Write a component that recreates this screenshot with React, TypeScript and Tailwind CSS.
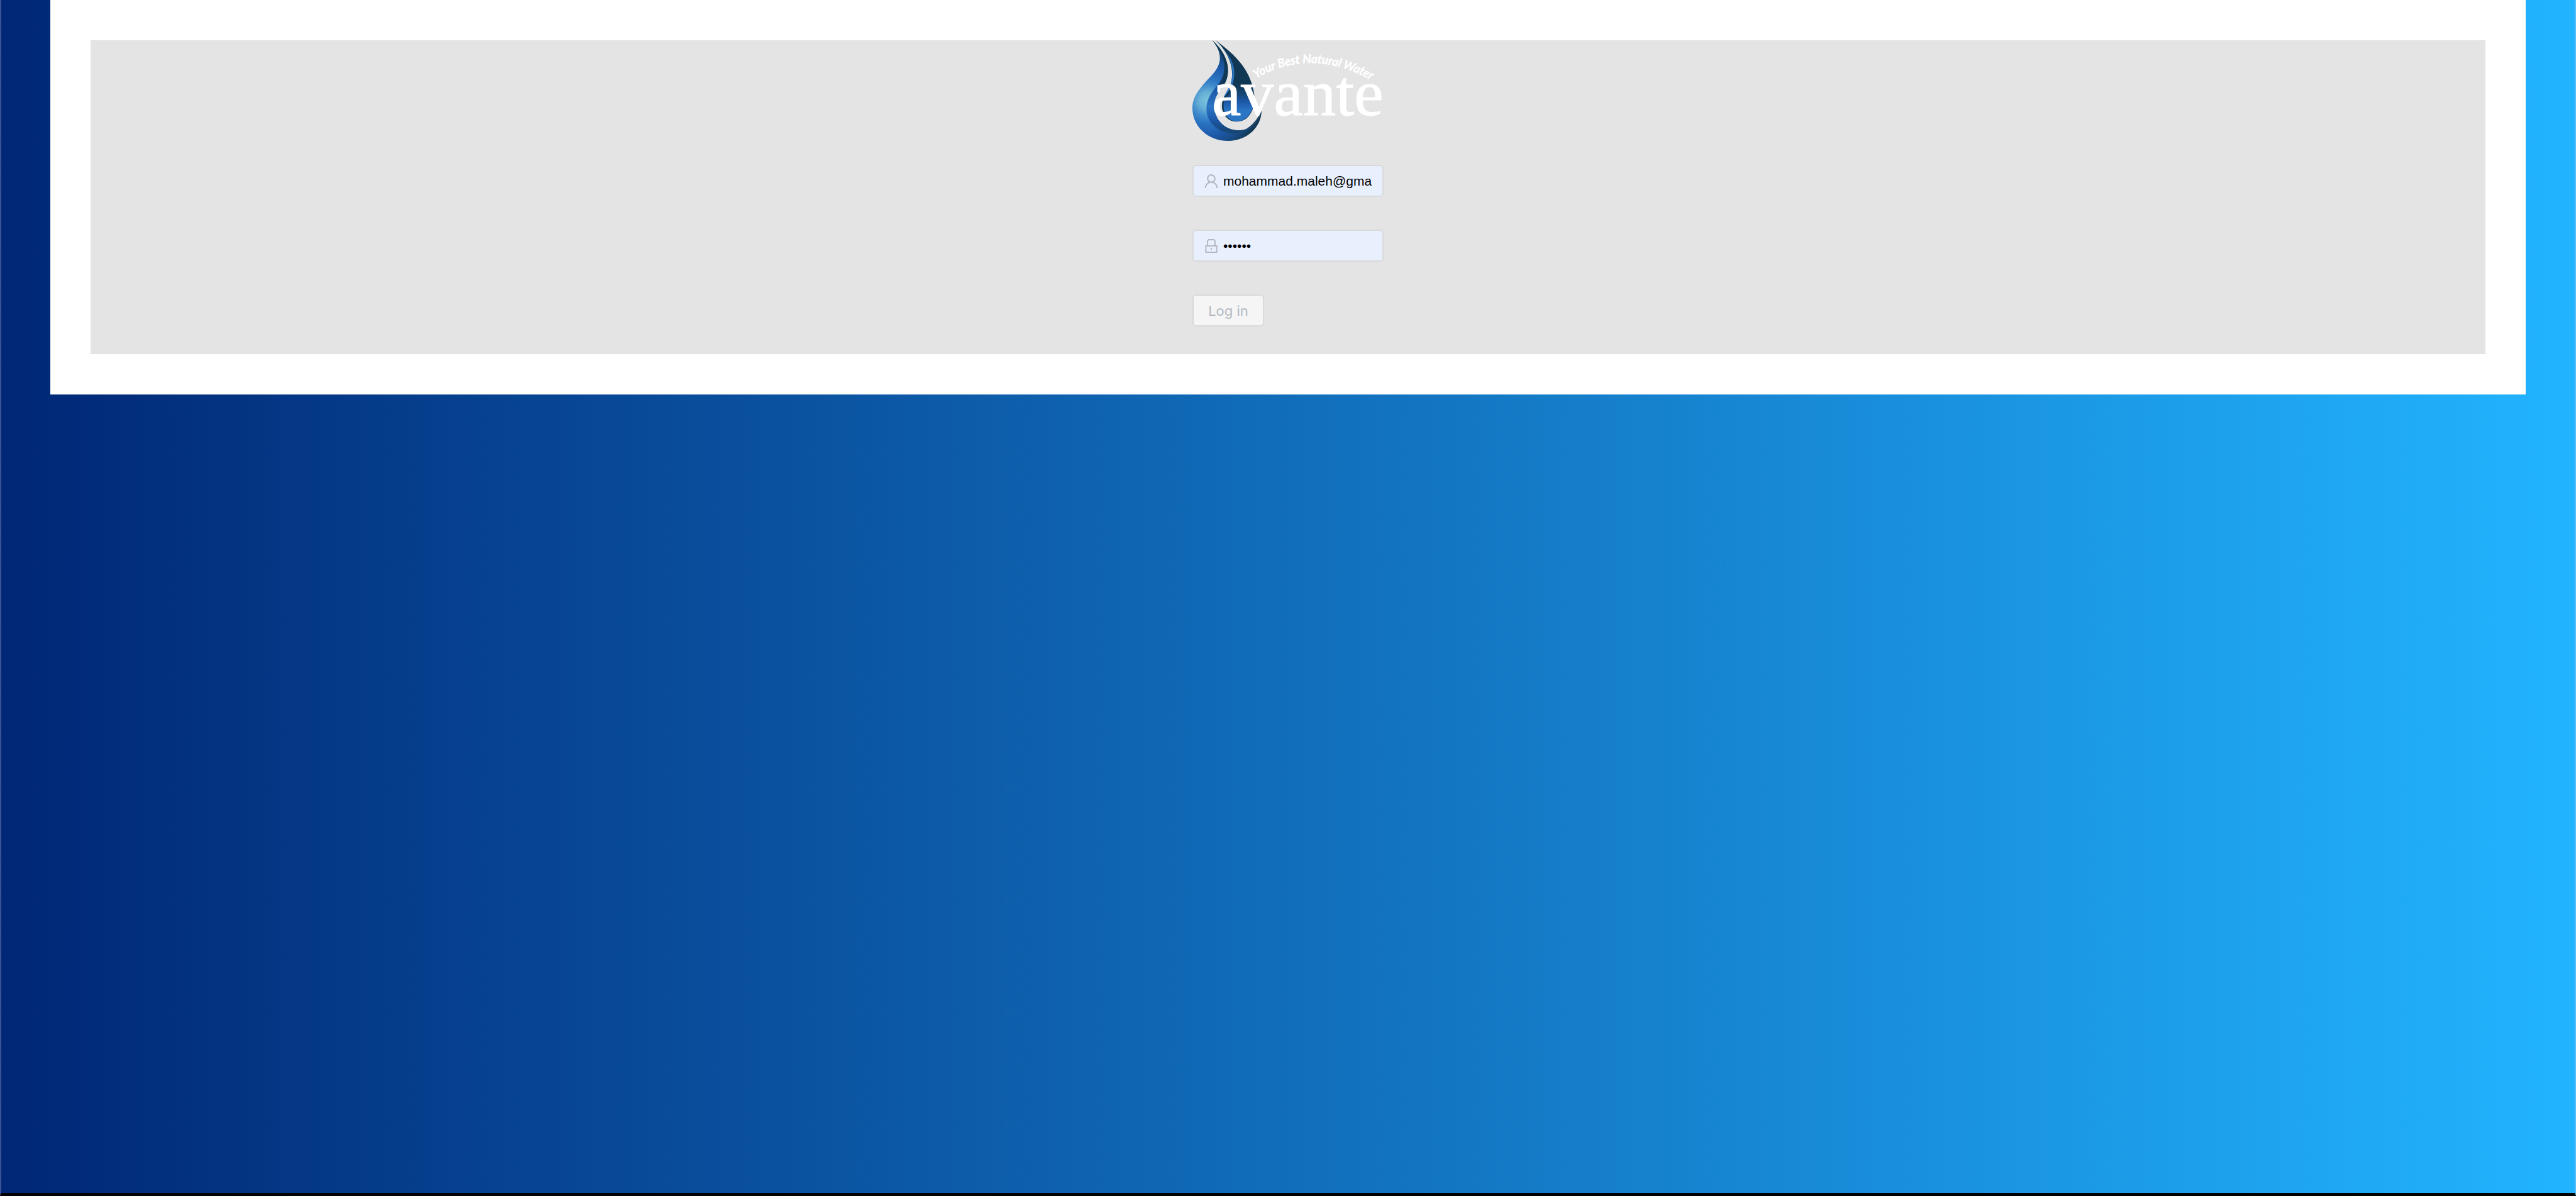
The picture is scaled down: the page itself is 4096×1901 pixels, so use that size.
import { useState } from "react";
import { AiOutlineLock, AiOutlineUser } from "react-icons/ai";

function Logo() {
  return (
    <svg
      viewBox="60 30 1140 600"
      className="block h-40 w-full"
      role="img"
      aria-label="avante, Your Best Natural Water"
    >
      <defs>
        <radialGradient id="glow" gradientUnits="userSpaceOnUse" cx="150" cy="390" r="320">
          <stop offset="0" stopColor="#7cc4dc" />
          <stop offset="0.16" stopColor="#66b0d6" />
          <stop offset="0.3" stopColor="#3f8acb" />
          <stop offset="0.42" stopColor="#2a74c2" />
          <stop offset="0.66" stopColor="#1d58a8" />
          <stop offset="0.86" stopColor="#17487c" />
          <stop offset="1" stopColor="#103753" />
        </radialGradient>
        <linearGradient id="fold" gradientUnits="userSpaceOnUse" x1="0" y1="120" x2="0" y2="590">
          <stop offset="0" stopColor="#103753" />
          <stop offset="0.2" stopColor="#174a7c" />
          <stop offset="0.42" stopColor="#1c57a6" />
          <stop offset="0.65" stopColor="#2a75c4" />
          <stop offset="0.82" stopColor="#1c58a8" />
          <stop offset="1" stopColor="#15436c" />
        </linearGradient>
        <linearGradient id="core" gradientUnits="userSpaceOnUse" x1="0" y1="300" x2="0" y2="450">
          <stop offset="0" stopColor="#103753" />
          <stop offset="0.35" stopColor="#164878" />
          <stop offset="0.65" stopColor="#1d58aa" />
          <stop offset="1" stopColor="#2a75c4" />
        </linearGradient>
        <linearGradient id="tail" gradientUnits="userSpaceOnUse" x1="220" y1="0" x2="470" y2="0">
          <stop offset="0" stopColor="#174a7c" stopOpacity="0" />
          <stop offset="0.45" stopColor="#164570" />
          <stop offset="0.8" stopColor="#103753" />
        </linearGradient>
        <path id="arc" d="M440 258 Q 770 60 1160 286" />
      </defs>
      <path
        fill="url(#glow)"
        d="M178 30 C222 82 232 130 218 172 C200 226 155 254 110 312 C78 352 60 388 60 434 C60 544 152 630 274 630 C392 630 474 540 472 448 C454 522 402 567 335 567 C252 567 190 500 190 422 C190 350 240 322 262 268 C290 180 250 92 178 30 Z"
      />
      <path
        fill="url(#fold)"
        d="M178 30 C232 90 258 150 248 214 C234 300 144 340 144 440 C144 520 214 584 304 584 C390 584 452 530 472 448 C454 522 402 567 335 567 C252 567 190 500 190 422 C190 350 240 322 262 268 C290 180 250 92 178 30 Z"
      />
      <path
        fill="#103753"
        d="M178 30 C230 80 262 140 250 220 C244 252 228 280 210 306 L240 308 C252 290 262 272 266 256 C290 180 250 92 178 30 Z"
      />
      <path
        fill="url(#tail)"
        d="M472 448 C474 540 392 630 274 630 L216 556 C300 604 412 584 472 448 C454 522 402 567 335 567 C300 567 264 555 236 530 L216 556 L274 630 C392 630 474 540 472 448 Z"
      />
      <path
        fill="#103753"
        d="M198 30 C300 104 376 180 408 272 C426 322 438 376 424 428 C404 486 372 515 322 515 C270 515 236 470 236 420 C236 372 270 340 288 290 C306 240 306 130 198 30 Z"
      />
      <path
        fill="url(#core)"
        d="M310 292 C300 340 246 366 246 420 C246 478 282 513 322 513 C372 513 402 482 422 428 C428 390 424 350 416 310 Z"
      />
      <path
        fill="#2a75c4"
        d="M232 66 C300 140 322 200 304 276 C294 320 262 350 244 378 C256 344 276 322 288 290 C310 226 300 140 232 66 Z"
      />
      <text
        x="176"
        y="478"
        fill="#ffffff"
        stroke="#ffffff"
        strokeWidth="4"
        fontSize="392"
        className="font-['Liberation_Serif',serif]"
      >
        avante
      </text>
      <text
        fill="#ffffff"
        stroke="#ffffff"
        strokeWidth="3"
        fontSize="71"
        fontStyle="italic"
        className="font-[Lato,sans-serif] font-medium"
      >
        <textPath href="#arc">Your Best Natural Water</textPath>
      </text>
    </svg>
  );
}

const fieldClass =
  "flex h-[51px] items-center gap-[5px] rounded-md border-2 border-[#d9d9d9] bg-[#e8f0fe] pl-[14px] pr-[17px] text-[#b3b8c0]";
const inputClass =
  "min-w-0 flex-1 bg-transparent font-['Liberation_Sans',Arial,sans-serif] text-[21px] leading-8 text-black outline-none";

export default function App() {
  const [email, setEmail] = useState("mohammad.maleh@gmail.com");
  const [password, setPassword] = useState("secret");

  return (
    <div className="flex min-h-screen flex-col border-x-2 border-b-[5px] border-b-black border-l-[#3a5291] border-r-[#5cbcfb] bg-linear-to-r/srgb from-[#002776] to-[#22b4ff]">
      <main className="mx-[78px] bg-white p-16">
        <div className="bg-[#e4e4e4] pb-11">
          <form
            className="mx-auto flex w-[304px] flex-col"
            onSubmit={(event) => event.preventDefault()}
          >
            <Logo />
            <div className="mt-[38px] flex flex-col gap-[52px]">
              <label className={fieldClass}>
                <AiOutlineUser size={28} aria-hidden="true" className="shrink-0" />
                <input
                  type="text"
                  aria-label="Email"
                  value={email}
                  onChange={(event) => setEmail(event.target.value)}
                  className={inputClass}
                />
              </label>
              <label className={fieldClass}>
                <AiOutlineLock size={28} aria-hidden="true" className="shrink-0" />
                <input
                  type="password"
                  aria-label="Password"
                  value={password}
                  onChange={(event) => setPassword(event.target.value)}
                  className={inputClass}
                />
              </label>
              <button
                type="submit"
                disabled
                className="h-[51px] w-[114px] rounded-md border-2 border-[#d9d9d9] bg-[#f5f5f5] font-[Inter,sans-serif] text-[22px] leading-8 text-[#b3b8c0]"
              >
                Log in
              </button>
            </div>
          </form>
        </div>
      </main>
    </div>
  );
}
